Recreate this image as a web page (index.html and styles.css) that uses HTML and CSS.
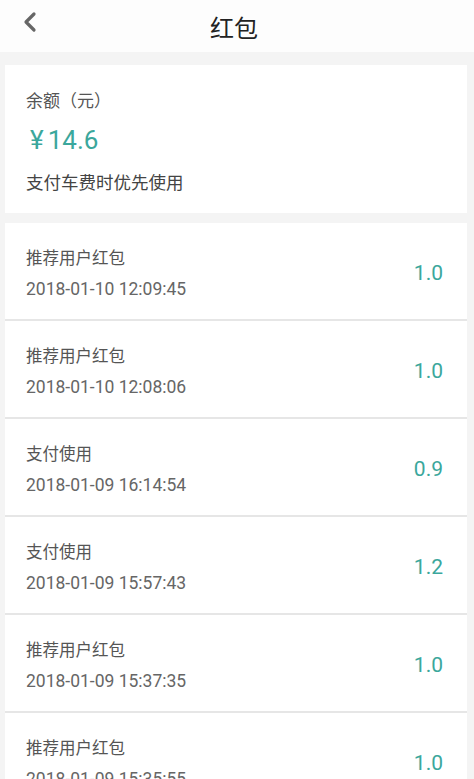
FILE: index.html
```html
<!DOCTYPE html>
<html>
<head>
    <meta charset="utf-8">
    <title>红包</title>
    <link rel="stylesheet" href="styles.css">
</head>
<body>
    <div class="header">
        <span class="back">
            <svg width="16" height="22" viewBox="0 0 16 22">
                <polyline points="12,3 4,11 12,19" fill="none" stroke="#666" stroke-width="3.2" stroke-linecap="round" stroke-linejoin="round"/>
            </svg>
        </span>
        <h1>红包</h1>
    </div>

    <div class="balance-card">
        <div class="balance-label">余额（元）</div>
        <div class="balance-amount"><span class="yen">¥</span>14.6</div>
        <div class="balance-tip">支付车费时优先使用</div>
    </div>

    <ul class="record-list">
        <li class="record-item">
            <div class="record-info">
                <span class="record-title">推荐用户红包</span>
                <span class="record-date">2018-01-10 12:09:45</span>
            </div>
            <span class="record-amount">1.0</span>
        </li>
        <li class="record-item">
            <div class="record-info">
                <span class="record-title">推荐用户红包</span>
                <span class="record-date">2018-01-10 12:08:06</span>
            </div>
            <span class="record-amount">1.0</span>
        </li>
        <li class="record-item">
            <div class="record-info">
                <span class="record-title">支付使用</span>
                <span class="record-date">2018-01-09 16:14:54</span>
            </div>
            <span class="record-amount">0.9</span>
        </li>
        <li class="record-item">
            <div class="record-info">
                <span class="record-title">支付使用</span>
                <span class="record-date">2018-01-09 15:57:43</span>
            </div>
            <span class="record-amount">1.2</span>
        </li>
        <li class="record-item">
            <div class="record-info">
                <span class="record-title">推荐用户红包</span>
                <span class="record-date">2018-01-09 15:37:35</span>
            </div>
            <span class="record-amount">1.0</span>
        </li>
        <li class="record-item">
            <div class="record-info">
                <span class="record-title">推荐用户红包</span>
                <span class="record-date">2018-01-09 15:35:55</span>
            </div>
            <span class="record-amount">1.0</span>
        </li>
    </ul>
</body>
</html>
```

FILE: styles.css
```css
body {
    margin: 0;
    font-family: Roboto, "Noto Sans CJK SC", sans-serif;
    background-color: #f4f4f4;
    color: #555;
}

.header {
    position: relative;
    height: 52px;
    background-color: #fdfdfd;
    display: flex;
    align-items: center;
    justify-content: center;
}

.back {
    position: absolute;
    left: 22px;
    top: 11px;
}

h1 {
    margin: 0 6px 0 0;
    font-size: 24px;
    font-weight: normal;
    color: #222;
    font-family: "Noto Sans CJK SC", sans-serif;
}

.balance-card {
    margin: 13px 7px 10px 5px;
    padding: 24px 21px 20px;
    background-color: #fff;
}

.balance-label,
.balance-tip {
    font-size: 17px;
    line-height: 22px;
    font-family: "Noto Sans CJK SC", sans-serif;
}

.balance-label {
    color: #555;
}

.balance-tip {
    font-size: 17.5px;
    color: #444;
    margin-top: 14px;
}

.balance-amount {
    margin-top: 12px;
    padding-left: 4px;
    font-size: 26px;
    line-height: 34px;
    color: #3ba79c;
}

.yen {
    margin-right: 4px;
}

.record-list {
    list-style: none;
    margin: 0 7px 0 5px;
    padding: 0;
}

.record-item {
    display: flex;
    align-items: center;
    justify-content: space-between;
    padding: 23px 24px 19px 21px;
    background-color: #fff;
    border-bottom: 2px solid #e6e6e6;
}

.record-info {
    display: flex;
    flex-direction: column;
    gap: 10px;
}

.record-title {
    font-size: 16.5px;
    line-height: 22px;
    color: #555;
    font-family: "Noto Sans CJK SC", sans-serif;
}

.record-date {
    font-size: 17.5px;
    line-height: 22px;
    color: #666;
}

.record-amount {
    font-size: 21px;
    color: #3ba79c;
}
```
